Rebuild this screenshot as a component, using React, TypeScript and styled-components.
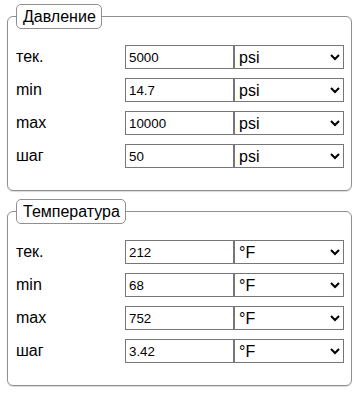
import React from 'react';
import styled, {createGlobalStyle} from 'styled-components';

interface Row {
  label: string;
  value: string;
}

interface Group {
  title: string;
  unit: string;
  rows: Row[];
}

const GlobalStyle = createGlobalStyle`
  body {
    margin: 0;
    background: #fff;
    font-family: "Liberation Sans", Arial, sans-serif;
  }
`

const Page = styled.div`
  padding: 4px 0 0 7px;
  width: 344px;
`

const Box = styled.fieldset`
  margin: 0 0 8px 0;
  padding: 16px 7px 22px 8px;
  border: 1px solid #8f8f8f;
  border-radius: 6px;
  box-shadow: 0 1px 1px rgba(0, 0, 0, 0.15);
`

const Title = styled.legend`
  padding: 2px 5px 2px 6px;
  border: 1px solid #8f8f8f;
  border-radius: 5px;
  font-size: 16px;
  line-height: 19px;
  color: #000;
  background: #fff;
`

const Grid = styled.div`
  display: grid;
  grid-template-columns: 109px 109px 110px;
  grid-auto-rows: 24px;
  row-gap: 9px;
  align-items: center;
`

const Label = styled.span`
  font-size: 16px;
  color: #000;
`

const Field = styled.input`
  box-sizing: border-box;
  width: 109px;
  height: 24px;
  margin: 0;
  padding: 1px 3px 0;
  border: 1px solid #767676;
  border-radius: 0;
  font-family: "Liberation Sans", Arial, sans-serif;
  font-size: 13.33px;
  color: #000;
`

const Unit = styled.select`
  box-sizing: border-box;
  width: 110px;
  height: 24px;
  margin: 0;
  padding: 0;
  border: 1px solid #767676;
  border-radius: 0;
  background: #fff;
  font-family: "Liberation Sans", Arial, sans-serif;
  font-size: 16px;
  color: #000;
`

const groups: Group[] = [
  {
    title: 'Давление',
    unit: 'psi',
    rows: [
      {label: 'тек.', value: '5000'},
      {label: 'min', value: '14.7'},
      {label: 'max', value: '10000'},
      {label: 'шаг', value: '50'},
    ],
  },
  {
    title: 'Температура',
    unit: '°F',
    rows: [
      {label: 'тек.', value: '212'},
      {label: 'min', value: '68'},
      {label: 'max', value: '752'},
      {label: 'шаг', value: '3.42'},
    ],
  },
];

const App = () => {
  return (
    <Page>
      <GlobalStyle/>
      {groups.map((group) => (
        <Box key={group.title}>
          <Title>{group.title}</Title>
          <Grid>
            {group.rows.map((row) => (
              <React.Fragment key={row.label}>
                <Label>{row.label}</Label>
                <Field defaultValue={row.value}/>
                <Unit defaultValue={group.unit}>
                  <option>{group.unit}</option>
                </Unit>
              </React.Fragment>
            ))}
          </Grid>
        </Box>
      ))}
    </Page>
  );
};

export default App;
